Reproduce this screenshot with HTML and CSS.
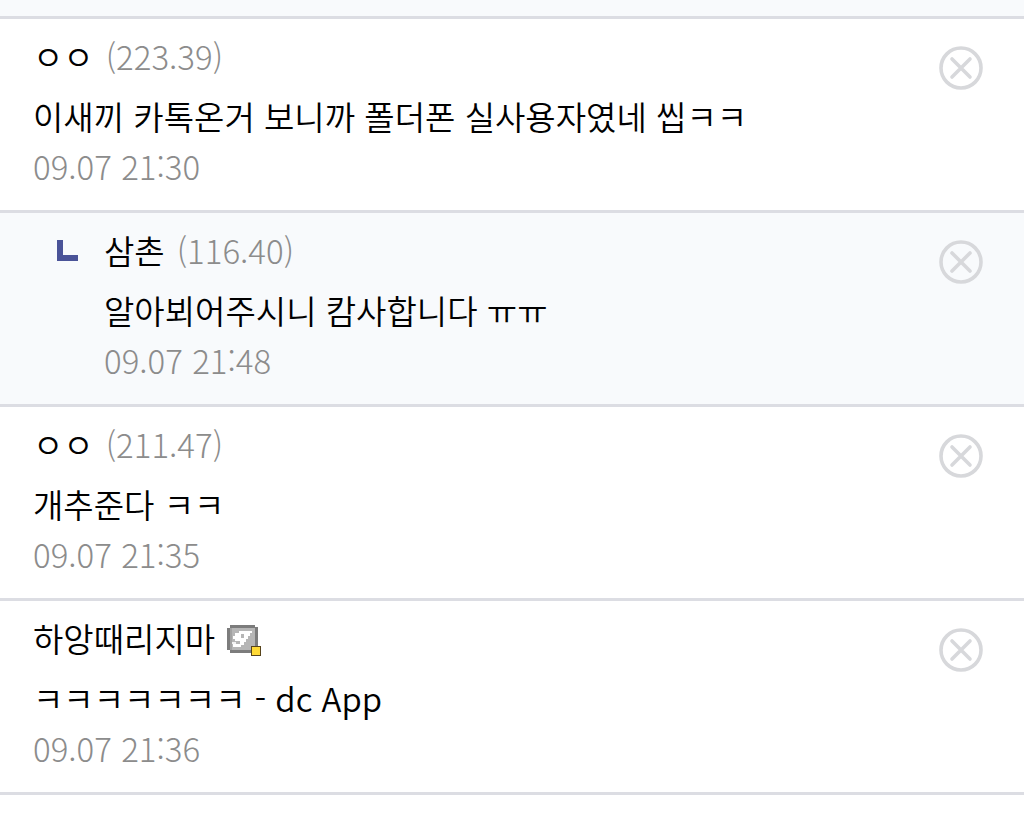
FILE: index.html
```html
<!DOCTYPE html>
<html lang="ko">
<head>
<meta charset="utf-8">
<meta name="viewport" content="width=device-width, initial-scale=1">
<title>댓글</title>
<link rel="stylesheet" href="styles.css">
</head>
<body>
<svg class="sprite" aria-hidden="true">
  <symbol id="icon-close" viewBox="0 0 44 44">
    <circle cx="22" cy="22" r="20" fill="none" stroke="currentColor" stroke-width="3.6"/>
    <path d="M13 13L31 31M31 13L13 31" fill="none" stroke="currentColor" stroke-width="3.6" stroke-linecap="round"/>
  </symbol>
</svg>
<main class="comments">
  <div class="previous"></div>
  <article class="comment">
    <div class="content">
      <div class="author"><span class="name">ㅇㅇ</span><span class="ip">(223.39)</span></div>
      <p class="message">이새끼 카톡온거 보니까 폴더폰 실사용자였네 씹ㅋㅋ</p>
      <time class="date">09.07 21:30</time>
    </div>
    <button class="delete" type="button" aria-label="삭제"><svg class="delete-icon"><use href="#icon-close"/></svg></button>
  </article>
  <article class="comment reply">
    <svg class="reply-icon" viewBox="0 0 21 21" aria-hidden="true"><path d="M0 0H6V15H21V21H0Z" fill="#4a5398"/></svg>
    <div class="content">
      <div class="author"><span class="name">삼촌</span><span class="ip">(116.40)</span></div>
      <p class="message">알아뵈어주시니 캄사합니다 ㅠㅠ</p>
      <time class="date">09.07 21:48</time>
    </div>
    <button class="delete" type="button" aria-label="삭제"><svg class="delete-icon"><use href="#icon-close"/></svg></button>
  </article>
  <article class="comment">
    <div class="content">
      <div class="author"><span class="name">ㅇㅇ</span><span class="ip">(211.47)</span></div>
      <p class="message">개추준다 ㅋㅋ</p>
      <time class="date">09.07 21:35</time>
    </div>
    <button class="delete" type="button" aria-label="삭제"><svg class="delete-icon"><use href="#icon-close"/></svg></button>
  </article>
  <article class="comment">
    <div class="content">
      <div class="author"><span class="name">하앙때리지마</span>
        <svg class="badge" viewBox="0 0 34 32" aria-hidden="true">
          <path d="M3 1H28V3H31V27H28V29H3V26H0V4H3Z" fill="#7c7c7c"/>
          <path d="M3 4H28V26H3Z" fill="#b6b6b6"/>
          <path d="M3 4H5V26H3Z" fill="#a2a2a2"/>
          <path d="M12 7H25V9H23V12H21V15H19V18H17V21H14V23H6V20H13V17H8V15H6V12H8V9H12ZM14 10V14H17V10Z" fill="#fff" fill-rule="evenodd"/>
          <path d="M5 18H9V20H5Z" fill="#f2f2f2"/>
          <path d="M24 22H34V32H24Z" fill="#57441c"/>
          <path d="M25 23H33V31H25Z" fill="#ffd935"/>
        </svg>
      </div>
      <p class="message">ㅋㅋㅋㅋㅋㅋㅋ - dc App</p>
      <time class="date">09.07 21:36</time>
    </div>
    <button class="delete" type="button" aria-label="삭제"><svg class="delete-icon"><use href="#icon-close"/></svg></button>
  </article>
</main>
</body>
</html>
```
FILE: styles.css
```css
* { box-sizing: border-box; }
body {
  margin: 0;
  background: #fff;
  color: #000;
  font-family: "Noto Sans CJK KR", sans-serif;
  font-size: 33px;
}
.sprite { position: absolute; width: 0; height: 0; }
.previous {
  height: 19px;
  background: #f8fafc;
  border-bottom: 3px solid #dcdde3;
}
.comment {
  display: flex;
  align-items: flex-start;
  padding: 7px 41px 24px 33px;
  border-bottom: 3px solid #dcdde3;
}
.reply { padding-left: 57px; background: #f8fafc; }
.reply-icon { flex: none; width: 21px; height: 21px; margin: 20px 26px 0 0; }
.content { flex: 1; min-width: 0; }
.author { display: flex; align-items: center; height: 60px; }
.name, .message { font-weight: 350; }
.ip { margin-left: 12px; }
.ip, .date { color: #8c8c8c; font-weight: 300; }
.badge { width: 34px; height: 32px; margin: 4px 0 0 12px; }
.message { margin: 0; line-height: 60px; }
.date { display: block; line-height: 40px; }
.delete {
  flex: none;
  width: 44px;
  height: 44px;
  margin: 20px 0 0 24px;
  padding: 0;
  border: 0;
  background: none;
  color: #d7d8db;
  cursor: pointer;
}
.delete-icon { display: block; width: 44px; height: 44px; }
```
